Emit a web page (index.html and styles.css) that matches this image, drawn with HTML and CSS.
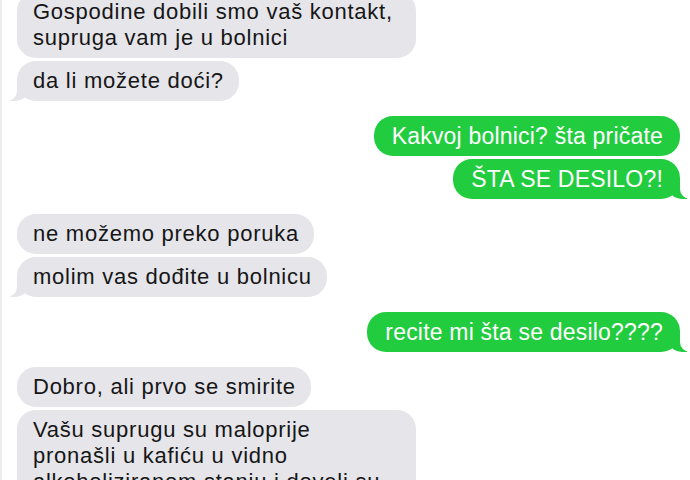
FILE: index.html
```html
<!DOCTYPE html>
<html lang="sr">
<head>
<meta charset="utf-8">
<link rel="stylesheet" href="styles.css">
</head>
<body>
<div class="thread">
  <div class="group in">
    <div class="msg wide">Gospodine dobili smo vaš kontakt,<br>supruga vam je u bolnici</div>
    <div class="msg tail">da li možete doći?</div>
  </div>
  <div class="group out">
    <div class="msg">Kakvoj bolnici? šta pričate</div>
    <div class="msg tail">ŠTA SE DESILO?!</div>
  </div>
  <div class="group in">
    <div class="msg">ne možemo preko poruka</div>
    <div class="msg tail">molim vas dođite u bolnicu</div>
  </div>
  <div class="group out">
    <div class="msg tail plain">recite mi šta se desilo????</div>
  </div>
  <div class="group in">
    <div class="msg">Dobro, ali prvo se smirite</div>
    <div class="msg wide">Vašu suprugu su maloprije<br>pronašli u kafiću u vidno<br>alkoholiziranom stanju i doveli su</div>
  </div>
</div>
</body>
</html>
```
FILE: styles.css
```css
html, body {
  margin: 0;
  padding: 0;
  background: #fff;
  overflow: hidden;
}
body {
  width: 690px;
  height: 480px;
  font-family: "Liberation Sans", Arial, sans-serif;
}
.thread {
  border-left: 2px solid #ececec;
  margin-top: -8px;
  padding: 0 10px 0 15px;
  display: flex;
  flex-direction: column;
  gap: 15px;
  min-height: 500px;
}
.group {
  display: flex;
  flex-direction: column;
  gap: 3px;
}
.group.in { align-items: flex-start; }
.group.out { align-items: flex-end; }
.msg {
  position: relative;
  line-height: 26px;
  border-radius: 19px;
  white-space: nowrap;
  box-sizing: border-box;
}
.msg.wide {
  width: 399px;
}
.in .msg {
  background: #e5e5ea;
  color: #161616;
  font-size: 22px;
  letter-spacing: 0.75px;
  padding: 7px 15px 7px 16px;
}
.out .msg {
  background: #22cc3f;
  color: #fff;
  font-size: 23px;
  letter-spacing: 0.2px;
  padding: 7px 17px 7px 18px;
}
.in .tail::before,
.in .tail::after,
.out .tail::before,
.out .tail::after {
  content: "";
  position: absolute;
  bottom: 0;
  height: 20px;
}
.in .tail::before {
  left: -7px;
  width: 20px;
  background: #e5e5ea;
  border-bottom-right-radius: 15px;
}
.in .tail::after {
  left: -10px;
  width: 10px;
  background: #fff;
  border-bottom-right-radius: 10px;
}
.out .tail::before {
  right: -7px;
  width: 20px;
  background: #22cc3f;
  border-bottom-left-radius: 15px;
}
.out .tail::after {
  right: -10px;
  width: 10px;
  background: #fff;
  border-bottom-left-radius: 10px;
}
```
